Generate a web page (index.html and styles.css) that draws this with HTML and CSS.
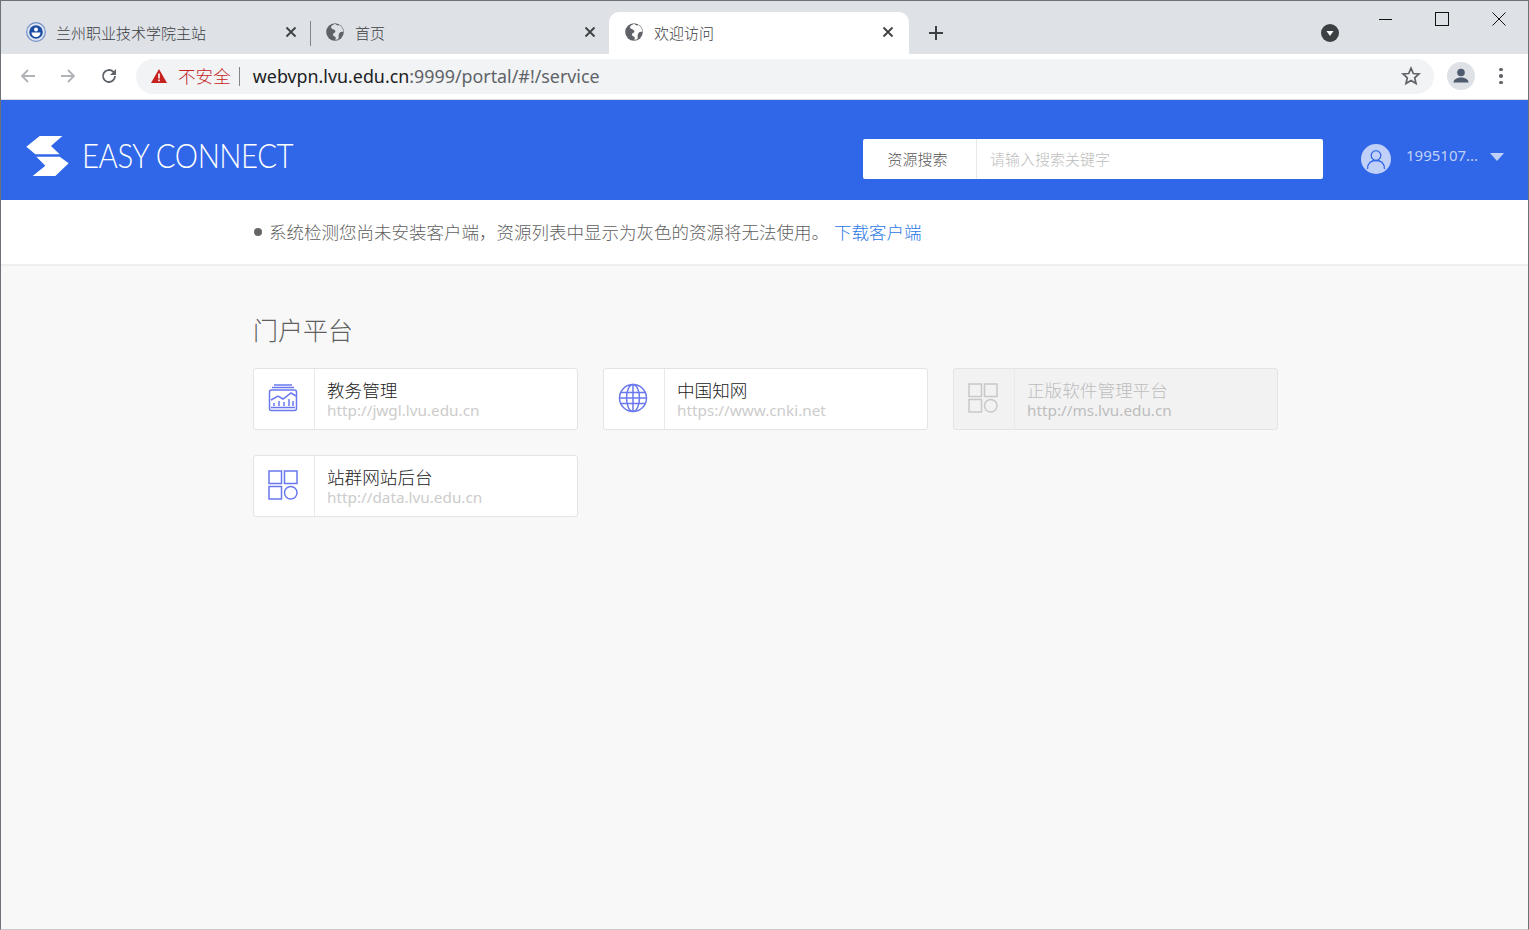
FILE: index.html
```html
<!DOCTYPE html>
<html lang="zh">
<head>
<meta charset="utf-8">
<title>欢迎访问</title>
<link rel="stylesheet" href="styles.css">
</head>
<body>
<div class="window">
  <div class="tabstrip">
    <div class="tab">
      <svg class="favicon" viewBox="0 0 20 20"><circle cx="10" cy="10" r="9.3" fill="#dfe6f2" stroke="#6f8fc8" stroke-width="1.2"/><circle cx="10" cy="10" r="6.8" fill="#1c4da3"/><path d="M5.5 10.5a4.5 4.5 0 0 0 9 0z" fill="#fff"/><circle cx="10" cy="7.5" r="2" fill="#fff"/></svg>
      <span class="tab-title">兰州职业技术学院主站</span>
      <svg class="tab-close" viewBox="0 0 12 12"><path d="M1.5 1.5l9 9M10.500 1.500l-9 9"/></svg>
    </div>
    <div class="tab tab-sep">
      <svg class="favicon" viewBox="0 0 20 20"><circle cx="10" cy="10" r="8.800" fill="#5f6368"/><path d="M10 1.500c-1 1.500-3.500 1.500-4 3.500-.3 1.500 2 2 3.500 3s1 2.500-.5 3-1.500 3 .5 3.500 1 2 1 3.500l3-1c.5-2-.5-4 1-6s3-1 4-1.500c-.5-3-2-5-4-6.500-1.500 1-3.500 0-4.500-1.500z" fill="#dee1e6"/></svg>
      <span class="tab-title">首页</span>
      <svg class="tab-close" viewBox="0 0 12 12"><path d="M1.5 1.5l9 9M10.500 1.500l-9 9"/></svg>
    </div>
    <div class="tab tab-active">
      <svg class="favicon" viewBox="0 0 20 20"><circle cx="10" cy="10" r="8.800" fill="#5f6368"/><path d="M10 1.500c-1 1.500-3.500 1.500-4 3.500-.3 1.500 2 2 3.500 3s1 2.500-.5 3-1.500 3 .5 3.500 1 2 1 3.500l3-1c.5-2-.5-4 1-6s3-1 4-1.500c-.5-3-2-5-4-6.500-1.500 1-3.500 0-4.500-1.500z" fill="#fff"/></svg>
      <span class="tab-title">欢迎访问</span>
      <svg class="tab-close" viewBox="0 0 12 12"><path d="M1.5 1.5l9 9M10.500 1.500l-9 9"/></svg>
    </div>
    <svg class="new-tab" viewBox="0 0 16 16"><path d="M8 1v14M1 8h14"/></svg>
    <svg class="tab-search" viewBox="0 0 18 18"><circle cx="9" cy="9" r="9" fill="#3c4043"/><path d="M5.500 7h7L9 12z" fill="#fff"/></svg>
    <div class="win-controls">
      <svg class="win-btn" viewBox="0 0 14 14"><path d="M1 7.500h13"/></svg>
      <svg class="win-btn" viewBox="0 0 14 14"><rect x=".5" y=".5" width="13" height="13"/></svg>
      <svg class="win-btn" viewBox="0 0 14 14"><path d="M.5.500l13 13M13.500.500l-13 13"/></svg>
    </div>
  </div>
  <div class="toolbar">
    <svg class="nav-icon nav-back" viewBox="0 0 18 18"><path d="M16 9H3M9 3L3 9l6 6"/></svg>
    <svg class="nav-icon nav-forward" viewBox="0 0 18 18"><path d="M2 9h13M9 3l6 6-6 6"/></svg>
    <svg class="nav-icon nav-reload" viewBox="0 0 18 18"><path d="M15 9a6 6 0 1 1-1.800-4.300L15 6.500"/><path class="solid" d="M16 2v6h-6z"/></svg>
    <div class="omnibox">
      <svg class="warn" viewBox="0 0 16 14"><path d="M8 0l8 14H0z" fill="#c5221f"/><path d="M7.200 4.500h1.600v5H7.200zM7.200 10.500h1.600v1.700H7.200z" fill="#fff"/></svg>
      <span class="insecure">不安全</span>
      <span class="omni-sep"></span>
      <span class="url"><span class="host">webvpn.lvu.edu.cn</span>:9999/portal/#!/service</span>
      <svg class="star" viewBox="0 0 20 20"><path d="M10 2.200l2.300 5.300 5.700.5-4.300 3.800 1.300 5.600-5-3-5 3 1.300-5.600L2 8l5.700-.5z"/></svg>
    </div>
    <div class="profile"><svg viewBox="0 0 28 28"><circle cx="14" cy="14" r="14" fill="#dee1e6"/><circle cx="14" cy="10.500" r="3.800" fill="#4f5b6e"/><path d="M6.500 20.500c0-3.500 4-5 7.500-5s7.500 1.500 7.500 5z" fill="#4f5b6e"/></svg></div>
    <div class="menu-dots"><i></i><i></i><i></i></div>
  </div>
  <header class="app-header">
    <div class="brand">
      <svg class="logo" viewBox="78 108 127 120"><path d="M78 140l40-32h68l-34 30 26 25h-73z" fill="#fff"/><path d="M108 170h70l27 20-40 38H97l38-31z" fill="#fff"/></svg>
      <span class="brand-name">EASY CONNECT</span>
    </div>
    <div class="search">
      <div class="search-label">资源搜索</div>
      <div class="search-input">请输入搜索关键字</div>
    </div>
    <div class="user">
      <svg class="avatar" viewBox="0 0 30 30"><circle cx="15" cy="15" r="15" fill="#c0d0f8"/><circle cx="15" cy="11.500" r="4.800" fill="none" stroke="#3067e8" stroke-width="1.300"/><path d="M6.500 25c0-6 3.500-8.500 8.500-8.500s8.500 2.500 8.500 8.500" fill="none" stroke="#3067e8" stroke-width="1.300"/></svg>
      <span class="user-name">1995107...</span>
      <span class="caret"></span>
    </div>
  </header>
  <div class="notice">
    <span class="notice-dot"></span>
    <span>系统检测您尚未安装客户端，资源列表中显示为灰色的资源将无法使用。</span>
    <a class="notice-link">下载客户端</a>
  </div>
  <main class="content">
    <h2 class="section-title">门户平台</h2>
    <div class="cards">
      <div class="card">
        <div class="card-icon"><svg viewBox="0 0 30 30"><path d="M6 2h18M4 4.500h22"/><rect x="1.500" y="7" width="27" height="20.500" rx="2"/><path d="M3 17l7-4 5 3 8-6 5 3"/><path d="M3 24.500h24M6 23v-3M11 23v-5M16 23v-4M21 23v-7M25 23v-5"/></svg></div>
        <div class="card-text"><div class="card-title">教务管理</div><div class="card-url">http://jwgl.lvu.edu.cn</div></div>
      </div>
      <div class="card">
        <div class="card-icon"><svg viewBox="0 0 30 30"><circle cx="15" cy="15" r="13.500"/><ellipse cx="15" cy="15" rx="6.500" ry="13.500"/><path d="M15 1.500v27M2.500 9.500h25M1.500 15h27M2.500 20.500h25"/></svg></div>
        <div class="card-text"><div class="card-title">中国知网</div><div class="card-url">https://www.cnki.net</div></div>
      </div>
      <div class="card card-disabled">
        <div class="card-icon"><svg viewBox="0 0 30 30"><rect x="1" y="1" width="12.500" height="12.500"/><rect x="16.500" y="1" width="12.500" height="12.500"/><rect x="1" y="16.500" width="12.500" height="12.500"/><circle cx="22.750" cy="22.750" r="6.250"/></svg></div>
        <div class="card-text"><div class="card-title">正版软件管理平台</div><div class="card-url">http://ms.lvu.edu.cn</div></div>
      </div>
      <div class="card">
        <div class="card-icon"><svg viewBox="0 0 30 30"><rect x="1" y="1" width="12.500" height="12.500"/><rect x="16.500" y="1" width="12.500" height="12.500"/><rect x="1" y="16.500" width="12.500" height="12.500"/><circle cx="22.750" cy="22.750" r="6.250"/></svg></div>
        <div class="card-text"><div class="card-title">站群网站后台</div><div class="card-url">http://data.lvu.edu.cn</div></div>
      </div>
    </div>
  </main>
</div>
</body>
</html>
```
FILE: styles.css
```css
* { box-sizing: border-box; }
html, body { margin: 0; height: 100%; overflow: hidden; }
body { font-family: "Noto Sans CJK SC", "Liberation Sans", sans-serif; font-weight: 300; }
.window { height: 930px; display: flex; flex-direction: column; border: 1px solid #6d7278; border-bottom-color: #c8c8c8; background: #f8f8f8; }

.tabstrip { height: 53px; flex: none; background: #dee1e6; display: flex; align-items: flex-end; padding-left: 10px; position: relative; }
.tab { width: 299px; height: 42px; display: flex; align-items: center; padding: 0 13px 2px 15px; position: relative; flex: none; }
.tab-sep::before { content: ""; position: absolute; left: 0; top: 9px; height: 25px; width: 1px; background: #80868b; }
.tab-active { width: 300px; padding-right: 15px; background: #fff; border-radius: 10px 10px 0 0; }
.favicon { width: 20px; height: 20px; flex: none; }
.tab-title { margin-left: 10px; font-size: 15px; color: #3c4043; flex: 1; white-space: nowrap; }
.tab-close { width: 12px; height: 12px; fill: none; stroke: #3c4043; stroke-width: 1.800; flex: none; }
.new-tab { width: 16px; height: 16px; fill: none; stroke: #3c4043; stroke-width: 2; margin: 0 0 13px 19px; flex: none; }
.tab-search { width: 18px; height: 18px; margin: 0 0 12px 377px; flex: none; }
.win-controls { position: absolute; top: 11px; right: 22px; display: flex; gap: 43px; }
.win-btn { width: 14px; height: 14px; fill: none; stroke: #111; stroke-width: 1; display: block; }

.toolbar { height: 46px; flex: none; background: #fff; border-bottom: 1px solid #dadce0; display: flex; align-items: center; padding: 0 19px 1px 18px; }
.nav-icon { width: 18px; height: 18px; fill: none; stroke: #b0b3b7; stroke-width: 1.800; flex: none; }
.nav-forward { margin-left: 22px; }
.nav-reload { margin-left: 23px; stroke: #5f6368; }
.nav-reload .solid { fill: #5f6368; stroke: none; }
.omnibox { margin-left: 18px; width: 1298px; height: 35px; border-radius: 18px; background: #f1f3f4; display: flex; align-items: center; padding: 0 13px 0 15px; flex: none; }
.warn { width: 16px; height: 14px; flex: none; }
.insecure { margin: 0 0 2px 11px; font-size: 17.600px; color: #c5221f; }
.omni-sep { width: 1px; height: 19px; margin: 0 13px 0 8px; background: #80868b; flex: none; }
.url { font-family: "Noto Sans", "Liberation Sans", sans-serif; font-weight: 400; font-size: 17.850px; color: #5f6368; flex: 1; white-space: nowrap; }
.host { color: #202124; }
.star { width: 20px; height: 20px; fill: none; stroke: #5f6368; stroke-width: 1.700; flex: none; }
.profile { margin-left: 13px; width: 28px; height: 28px; flex: none; }
.profile svg { display: block; width: 28px; height: 28px; }
.menu-dots { margin-left: 24px; display: flex; flex-direction: column; gap: 3px; flex: none; }
.menu-dots i { display: block; width: 3.500px; height: 3.500px; border-radius: 50%; background: #5f6368; }

.app-header { height: 100px; flex: none; background: #3067e8; display: flex; align-items: center; padding: 18px 24px 0 25px; }
.brand { display: flex; align-items: center; width: 837px; flex: none; margin-top: -6px; }
.logo { width: 43px; height: 40px; flex: none; }
.brand-name { margin: 0 0 3px 13px; font-family: "Lato", sans-serif; font-weight: 300; font-size: 33px; color: #fff; white-space: nowrap; letter-spacing: -.5px; transform: scaleX(.89); transform-origin: left center; }
.search { width: 460px; height: 40px; background: #fff; border-radius: 2px; display: flex; align-items: center; flex: none; }
.search-label { width: 114px; height: 100%; padding: 0 4px 2px 0; border-right: 1px solid #e8e8e8; font-size: 15px; color: #555; display: flex; align-items: center; justify-content: center; }
.search-input { padding: 0 0 2px 13px; font-size: 15px; color: #bdbdbd; }
.user { margin-left: 38px; display: flex; align-items: center; flex: none; }
.avatar { width: 30px; height: 30px; flex: none; }
.user-name { margin: 0 0 8px 15px; font-size: 15px; color: #c0d0f8; font-family: "Noto Sans", sans-serif; font-weight: 400; }
.caret { margin: -4px 0 0 12px; width: 0; height: 0; border-left: 7px solid transparent; border-right: 7px solid transparent; border-top: 8px solid #c0d0f8; }

.notice { height: 66px; flex: none; background: #fff; border-bottom: 2px solid #eeeeee; padding: 0 0 2px 252px; display: flex; align-items: center; font-size: 17.500px; color: #5f5f5f; }
.notice-dot { width: 8px; height: 8px; margin: 2px 7px 0 1px; border-radius: 50%; background: #666; flex: none; }
.notice-link { margin-left: 5px; color: #2a78e4; }

.content { flex: 1; padding: 0 0 0 252px; }
.section-title { margin: 45px 0 21px; font-size: 25px; line-height: 36px; font-weight: 300; color: #5f5f5f; }
.cards { display: grid; grid-template-columns: repeat(3, 325px); grid-auto-rows: 62px; gap: 25px; }
.card { display: flex; background: #fff; border: 1px solid #e4e4e4; border-radius: 3px; }
.card-icon { width: 61px; flex: none; padding: 0 2px 2px 0; border-right: 1px solid #eaeaea; display: flex; align-items: center; justify-content: center; }
.card-icon svg { width: 30px; height: 30px; fill: none; stroke: #6a78ee; stroke-width: 1.500; }
.card-text { padding: 10px 0 0 12px; min-width: 0; }
.card-title { font-size: 17.600px; line-height: 22px; color: #222; white-space: nowrap; }
.card-url { margin-top: 1px; font-family: "Noto Sans", "Liberation Sans", sans-serif; font-weight: 400; font-size: 15.300px; line-height: 17px; color: #ccc; white-space: nowrap; }
.card-disabled { background: #f2f2f2; }
.card-disabled .card-icon svg { stroke: #c8c8c8; }
.card-disabled .card-title, .card-disabled .card-url { color: #bdbdbd; }
```
